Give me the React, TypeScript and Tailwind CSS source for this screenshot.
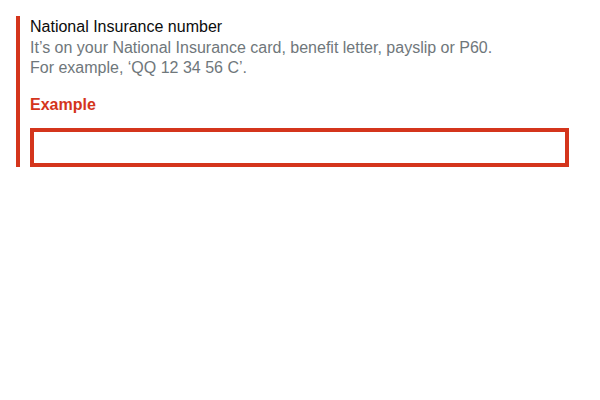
export default function App() {
  return (
    <div className="bg-white w-[600px] h-[400px] pt-4 pl-4" style={{ fontFamily: '"Liberation Sans", Arial, sans-serif' }}>
      <div className="border-l-4 border-[#d4351c] pl-[10px] pt-[1px] w-[553px]">
        <label className="block text-[16px] leading-[20px] text-[#0b0c0c]">National Insurance number</label>
        <div className="mt-[1px] text-[16px] leading-[20px] text-[#6f777b]">
          <div>It’s on your National Insurance card, benefit letter, payslip or P60.</div>
          <div>For example, ‘QQ 12 34 56 C’.</div>
        </div>
        <div className="mt-[17px] text-[16px] leading-[20px] font-bold text-[#d4351c]">Example</div>
        <input type="text" className="mt-[13px] block w-[539px] h-[39px] border-4 border-[#d4351c] outline-none bg-white" />
      </div>
    </div>
  );
}
